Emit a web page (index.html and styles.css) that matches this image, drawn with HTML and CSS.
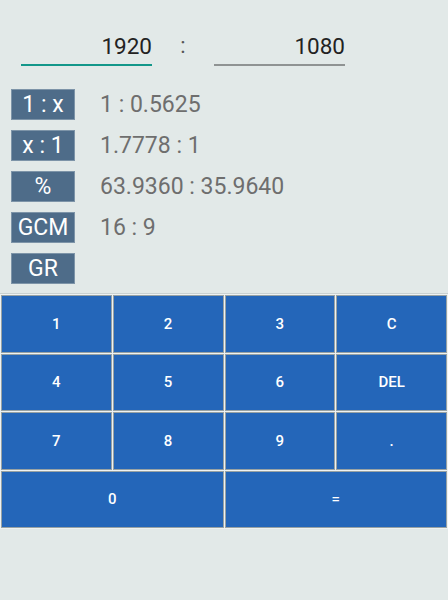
FILE: index.html
```html
<!DOCTYPE html>
<html>
<head>
<meta charset="utf-8">
<link rel="stylesheet" href="styles.css">
</head>
<body>
<div class="app">
  <div class="inputs">
    <div class="field focused">1920</div>
    <div class="colon">:</div>
    <div class="field">1080</div>
  </div>
  <div class="results">
    <div class="row"><div class="tag">1 : x</div><div class="val">1 : 0.5625</div></div>
    <div class="row"><div class="tag">x : 1</div><div class="val">1.7778 : 1</div></div>
    <div class="row"><div class="tag">%</div><div class="val">63.9360 : 35.9640</div></div>
    <div class="row"><div class="tag">GCM</div><div class="val">16 : 9</div></div>
    <div class="row"><div class="tag">GR</div><div class="val"></div></div>
  </div>
  <div class="keypad">
    <div class="key">1</div>
    <div class="key">2</div>
    <div class="key">3</div>
    <div class="key">C</div>
    <div class="key">4</div>
    <div class="key">5</div>
    <div class="key">6</div>
    <div class="key">DEL</div>
    <div class="key">7</div>
    <div class="key">8</div>
    <div class="key">9</div>
    <div class="key">.</div>
    <div class="key wide">0</div>
    <div class="key wide">=</div>
  </div>
</div>
</body>
</html>
```

FILE: styles.css
```css
html, body {
  margin: 0;
  padding: 0;
  background: #e2e9e8;
  font-family: Roboto, "Noto Sans", sans-serif;
}
.app {
  width: 448px;
  height: 600px;
  display: flex;
  flex-direction: column;
}
.inputs {
  display: flex;
  align-items: flex-end;
  padding: 31px 0 0 21px;
  height: 35px;
}
.field {
  width: 131px;
  text-align: right;
  font-size: 22.5px;
  line-height: 30px;
  color: #222;
  border-bottom: 2px solid #8f9393;
  padding-bottom: 1px;
  box-sizing: border-box;
  height: 35px;
}
.field.focused {
  border-bottom-color: #13978a;
}
.colon {
  width: 62px;
  text-align: center;
  font-size: 22px;
  line-height: 30px;
  color: #555;
  height: 35px;
  box-sizing: border-box;
  padding-bottom: 1px;
}
.results {
  display: flex;
  flex-direction: column;
  gap: 10px;
  padding: 23px 0 0 11px;
}
.row {
  display: flex;
  align-items: center;
  height: 31px;
}
.tag {
  width: 64px;
  height: 31px;
  box-sizing: border-box;
  background: #4e6c89;
  border: 1px solid #7d94a8;
  color: #fff;
  font-size: 23px;
  line-height: 29px;
  text-align: center;
}
.val {
  margin-left: 25px;
  font-size: 23px;
  color: #6e6e6e;
  line-height: 32px;
}
.keypad {
  margin-top: 9px;
  display: grid;
  grid-template-columns: repeat(4, 1fr);
  grid-auto-rows: 57.5px;
  gap: 1px;
  padding: 1px;
  background: #eef2f2;
  border-top: 1px solid #c9d1d1;
}
.key {
  background: #2466b9;
  border: 1px solid #98a2a4;
  color: #fff;
  font-size: 15px;
  font-weight: 500;
  display: flex;
  align-items: center;
  justify-content: center;
}
.key.wide {
  grid-column: span 2;
}
```
